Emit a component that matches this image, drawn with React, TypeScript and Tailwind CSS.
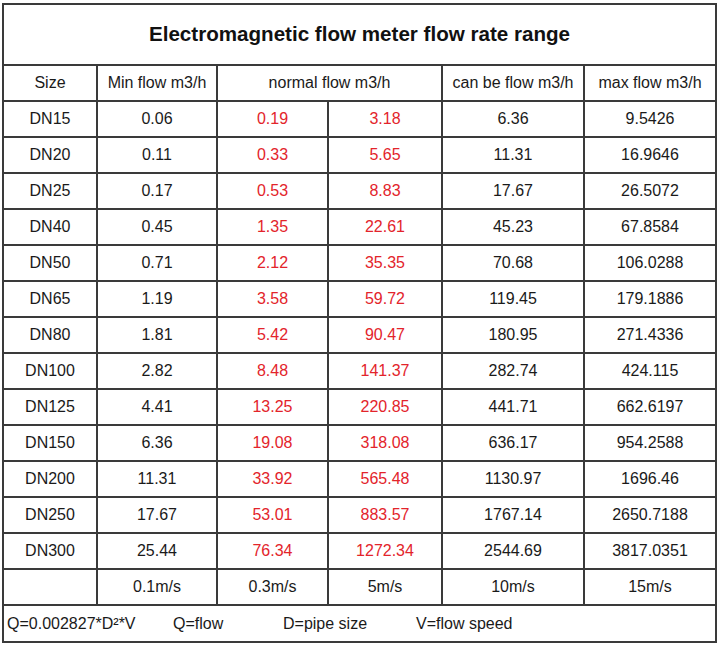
import React from "react";

const rows: [string, string, string, string, string, string][] = [
  ["DN15", "0.06", "0.19", "3.18", "6.36", "9.5426"],
  ["DN20", "0.11", "0.33", "5.65", "11.31", "16.9646"],
  ["DN25", "0.17", "0.53", "8.83", "17.67", "26.5072"],
  ["DN40", "0.45", "1.35", "22.61", "45.23", "67.8584"],
  ["DN50", "0.71", "2.12", "35.35", "70.68", "106.0288"],
  ["DN65", "1.19", "3.58", "59.72", "119.45", "179.1886"],
  ["DN80", "1.81", "5.42", "90.47", "180.95", "271.4336"],
  ["DN100", "2.82", "8.48", "141.37", "282.74", "424.115"],
  ["DN125", "4.41", "13.25", "220.85", "441.71", "662.6197"],
  ["DN150", "6.36", "19.08", "318.08", "636.17", "954.2588"],
  ["DN200", "11.31", "33.92", "565.48", "1130.97", "1696.46"],
  ["DN250", "17.67", "53.01", "883.57", "1767.14", "2650.7188"],
  ["DN300", "25.44", "76.34", "1272.34", "2544.69", "3817.0351"],
];

const cell = "bg-white flex items-center justify-center h-[34px] text-[16px] text-[#1a1a1a]";
const red = "bg-white flex items-center justify-center h-[34px] text-[16px] text-[#e3242b]";

export default function App() {
  return (
    <div className="bg-white w-[718px] h-[645px] pt-[3px] pl-[2px]" style={{ fontFamily: '"Liberation Sans", Arial, sans-serif' }}>
      <div className="grid grid-cols-[92px_118px_109px_112px_140px_130px] gap-[2px] bg-[#3a3a3a] p-[2px] w-[715px]">
        <div className="col-span-6 bg-white h-[59px] flex items-center justify-center text-[20.6px] font-bold text-[#111]">
          Electromagnetic flow meter flow rate range
        </div>
        <div className={cell}>Size</div>
        <div className={cell}>Min flow m3/h</div>
        <div className={`${cell} col-span-2`}>normal flow m3/h</div>
        <div className={cell}>can be flow m3/h</div>
        <div className={cell}>max flow m3/h</div>
        {rows.map((r) => (
          <React.Fragment key={r[0]}>
            <div className={cell}>{r[0]}</div>
            <div className={cell}>{r[1]}</div>
            <div className={red}>{r[2]}</div>
            <div className={red}>{r[3]}</div>
            <div className={cell}>{r[4]}</div>
            <div className={cell}>{r[5]}</div>
          </React.Fragment>
        ))}
        <div className={cell}></div>
        <div className={cell}>0.1m/s</div>
        <div className={cell}>0.3m/s</div>
        <div className={cell}>5m/s</div>
        <div className={cell}>10m/s</div>
        <div className={cell}>15m/s</div>
        <div className="col-span-6 bg-white h-[35px] flex items-center pl-[3px] text-[16px] text-[#1a1a1a]">
          <span className="w-[166px]">Q=0.002827*D²*V</span>
          <span className="w-[110px]">Q=flow</span>
          <span className="w-[133px]">D=pipe size</span>
          <span>V=flow speed</span>
        </div>
      </div>
    </div>
  );
}
